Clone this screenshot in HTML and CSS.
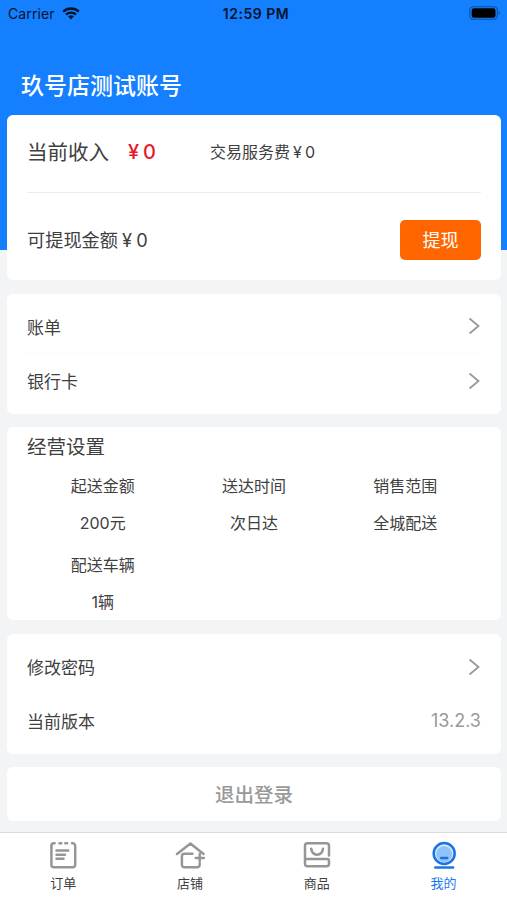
FILE: index.html
```
<!DOCTYPE html>
<html lang="zh-CN">
<head>
  <meta charset="UTF-8" />
  <meta name="viewport" content="width=device-width, initial-scale=1.0"/>
  <title>我的</title>
  <link rel="stylesheet" href="styles.css">
</head>
<body>
  <div class="page">
    <div class="status-bar">
      <div class="carrier">
        <span>Carrier</span>
        <svg class="wifi" width="18" height="13" viewBox="0 0 18 13">
          <path d="M1.2 4.6a11.3 11.3 0 0 1 15.6 0M4 7.6a7.2 7.2 0 0 1 10 0" fill="none" stroke="#06142b" stroke-width="2.3"/>
          <path d="M9 12.4L6.2 9.6a4 4 0 0 1 5.6 0z" fill="#06142b"/>
        </svg>
      </div>
      <div class="time">12:59 PM</div>
      <div class="battery-wrap">
        <svg width="32" height="14" viewBox="0 0 32 14">
          <rect x=".9" y=".7" width="27.4" height="12.6" rx="3.6" fill="none" stroke="#0d4f9e" stroke-width="1.1"/>
          <rect x="2.7" y="2.3" width="23.8" height="9.4" rx="2.2" fill="#000"/>
          <path d="M29.6 5v4c1.6-.7 1.6-3.3 0-4z" fill="#0d4f9e"/>
        </svg>
      </div>
    </div>

    <h1 class="shop-name">玖号店测试账号</h1>

    <div class="content">
      <div class="card income">
        <div class="income-row">
          <span class="income-label">当前收入</span>
          <span class="income-value"><span class="yen">¥</span>0</span>
          <span class="fee">交易服务费<span class="yen">¥</span>0</span>
        </div>
        <div class="withdraw-row">
          <span class="balance">可提现金额<span class="yen">¥</span>0</span>
          <button class="withdraw-btn">提现</button>
        </div>
      </div>

      <div class="card list">
        <div class="list-item line">
          <span>账单</span>
          <svg class="arrow" width="12" height="18" viewBox="0 0 12 18"><path d="M1.5 1.5L10.5 9l-9 7.5"/></svg>
        </div>
        <div class="list-item">
          <span>银行卡</span>
          <svg class="arrow" width="12" height="18" viewBox="0 0 12 18"><path d="M1.5 1.5L10.5 9l-9 7.5"/></svg>
        </div>
      </div>

      <div class="card settings">
        <h2>经营设置</h2>
        <div class="settings-grid">
          <div class="setting"><span>起送金额</span><span>200元</span></div>
          <div class="setting"><span>送达时间</span><span>次日达</span></div>
          <div class="setting"><span>销售范围</span><span>全城配送</span></div>
          <div class="setting"><span>配送车辆</span><span>1辆</span></div>
        </div>
      </div>

      <div class="card list">
        <div class="list-item">
          <span>修改密码</span>
          <svg class="arrow" width="12" height="18" viewBox="0 0 12 18"><path d="M1.5 1.5L10.5 9l-9 7.5"/></svg>
        </div>
        <div class="list-item">
          <span>当前版本</span>
          <span class="version">13.2.3</span>
        </div>
      </div>

      <button class="card logout">退出登录</button>
    </div>

    <nav class="tab-bar">
      <a class="tab">
        <svg width="30" height="30" viewBox="0 0 30 30">
          <path d="M6.600 3.300H5.900a2.500 2.500 0 0 0-2.500 2.500v19a2.500 2.500 0 0 0 2.500 2.500h18.800a2.500 2.500 0 0 0 2.500-2.500v-19a2.500 2.500 0 0 0-2.500-2.500h-.700M11.500 3.300h1.800M17.300 3.300h1.800M8.500 10.500h11.800M8.500 14.700h8.500M8.500 18.800h7"/>
        </svg>
        <span>订单</span>
      </a>
      <a class="tab">
        <svg width="30" height="30" viewBox="0 0 30 30">
          <path d="M2 14L15.400 3.600 28.500 14M17.500 13.700H9.400a2.500 2.500 0 0 0-2.500 2.500v8.600a2.500 2.500 0 0 0 2.500 2.500h12.800a2.500 2.500 0 0 0 2.500-2.500v-1.300M20.800 18h8M24.700 14v7.500"/>
        </svg>
        <span>店铺</span>
      </a>
      <a class="tab">
        <svg width="30" height="30" viewBox="0 0 30 30">
          <path d="M27 15.500V5.800a2.500 2.500 0 0 0-2.500-2.500h-19a2.500 2.500 0 0 0-2.500 2.500v18a2.500 2.500 0 0 0 2.500 2.500h19a2.500 2.500 0 0 0 2.500-2.500v-2.900a2 2 0 0 0-2-2H3.200M9.200 8.800c1.200 7.800 10.600 7.800 11.800 0"/>
        </svg>
        <span>商品</span>
      </a>
      <a class="tab active">
        <svg width="30" height="30" viewBox="0 0 30 30">
          <circle cx="15.200" cy="13.500" r="10.500" fill="#d4e9ff"/>
          <circle cx="15.200" cy="14.200" r="8" class="face"/>
          <path d="M12.200 18h6M6.300 27.600h17.800"/>
        </svg>
        <span>我的</span>
      </a>
    </nav>
  </div>
</body>
</html>
```

FILE: styles.css
```
* {
  box-sizing: border-box;
}

body {
  margin: 0;
  font-family: Inter, 'Noto Sans CJK SC', sans-serif;
  color: #404040;
  background: #f2f4f6;
}

h1, h2 {
  margin: 0;
}

button {
  border: none;
  padding: 0;
  font-family: inherit;
}

.page {
  display: flex;
  flex-direction: column;
  height: 900px;
  background: linear-gradient(#147fff 250px, #f2f4f6 250px);
}

.status-bar {
  display: grid;
  grid-template-columns: 1fr auto 1fr;
  align-items: center;
  height: 26px;
  padding: 0 6px 0 8px;
  font-size: 14px;
  color: #06142b;
}

.carrier {
  display: flex;
  align-items: center;
  gap: 7px;
  letter-spacing: 0.1px;
}

.time {
  padding-left: 3px;
  font-weight: 600;
  letter-spacing: 0.5px;
}

.battery-wrap {
  display: flex;
  justify-content: flex-end;
}

.shop-name {
  height: 89px;
  padding: 43px 21px 0;
  font-size: 23px;
  line-height: 34px;
  font-weight: 500;
  color: #fff;
}

.content {
  display: flex;
  flex-direction: column;
  gap: 13.5px;
  flex: 1;
  padding: 0 6px 0 7px;
}

.card {
  padding: 0 20px;
  background: #fff;
  border-radius: 6px;
}

.yen {
  display: inline-block;
  width: 1em;
  text-align: center;
}

.income {
  height: 165px;
}

.income-row {
  display: flex;
  align-items: center;
  height: 78px;
  padding-bottom: 6px;
  border-bottom: 1px solid #ececec;
}

.income-label {
  width: 98px;
  font-size: 20.5px;
}

.income-value {
  width: 85px;
  padding-top: 2px;
  font-size: 20px;
  font-weight: 500;
  color: #e8192c;
}

.income-value .yen {
  width: 17px;
  margin-right: 1px;
}

.fee {
  font-size: 16px;
}

.fee .yen {
  width: 15px;
}

.withdraw-row {
  display: flex;
  align-items: center;
  justify-content: space-between;
  padding-top: 27px;
}

.balance {
  padding-bottom: 2px;
  font-size: 18.2px;
}

.withdraw-btn {
  width: 81px;
  height: 40px;
  padding-bottom: 2px;
  font-size: 18px;
  color: #fff;
  background: #ff6600;
  border-radius: 5px;
}

.list {
  height: 120px;
  padding-top: 6px;
}

.list-item {
  display: flex;
  align-items: center;
  justify-content: space-between;
  height: 54px;
  font-size: 17px;
}

.line {
  border-bottom: 1px solid #fafafa;
}

.arrow {
  margin-right: 1px;
}

.arrow path {
  fill: none;
  stroke: #999;
  stroke-width: 1.8;
}

.version {
  font-size: 18px;
  color: #999;
}

.settings {
  height: 193px;
  padding-top: 5px;
}

.settings h2 {
  font-size: 19.5px;
  line-height: 30px;
  font-weight: 400;
}

.settings-grid {
  display: grid;
  grid-template-columns: repeat(3, 1fr);
  row-gap: 6px;
  padding-top: 6px;
}

.setting {
  display: flex;
  flex-direction: column;
  align-items: center;
  font-size: 16px;
  line-height: 36.5px;
}

.logout {
  height: 54px;
  padding-bottom: 2px;
  font-size: 19.5px;
  font-weight: 500;
  color: #999;
}

.tab-bar {
  display: grid;
  grid-template-columns: repeat(4, 1fr);
  height: 68px;
  padding-top: 7px;
  background: #fff;
  border-top: 1px solid #dcdcde;
}

.tab {
  display: flex;
  flex-direction: column;
  align-items: center;
  gap: 4px;
  font-size: 13px;
  line-height: 18px;
}

.tab path, .tab circle {
  stroke: #969696;
  stroke-width: 2.5;
  stroke-linecap: round;
  stroke-linejoin: round;
}

.tab path {
  fill: none;
}

.active {
  color: #1b7af0;
}

.tab.active path, .tab.active circle {
  stroke: #1b74e4;
}

.tab.active .face {
  fill: #8fc2fb;
  stroke: none;
}
```
